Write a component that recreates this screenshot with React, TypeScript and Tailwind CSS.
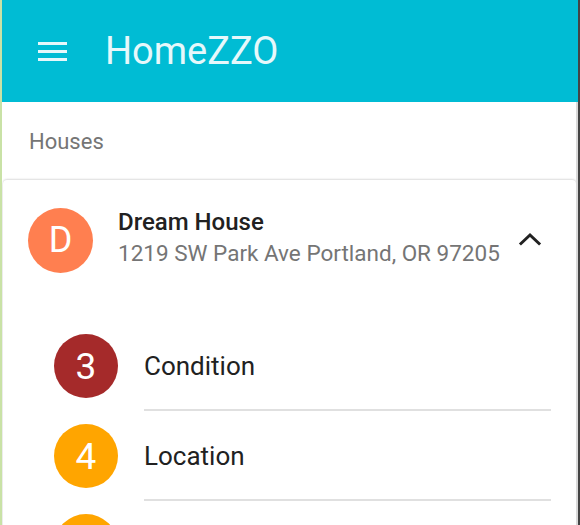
import React from 'react';

interface Section {
  num: string;
  label: string;
  color: string;
}

const sections: Section[] = [
  { num: '3', label: 'Condition', color: 'bg-[#a52a2a]' },
  { num: '4', label: 'Location', color: 'bg-[#ffa500]' },
  { num: '5', label: 'Price', color: 'bg-[#ffa500]' },
];

const MenuIcon = () => (
  <svg width="29" height="19" viewBox="0 0 29 19" fill="currentColor">
    <rect x="0" y="0" width="29" height="3" />
    <rect x="0" y="8" width="29" height="3" />
    <rect x="0" y="16" width="29" height="3" />
  </svg>
);

const ChevronUp = () => (
  <svg width="24" height="14" viewBox="0 0 24 14" fill="none" stroke="currentColor" strokeWidth="3" strokeLinecap="square">
    <path d="M3 11.5l9-8.5 9 8.5" />
  </svg>
);

export default function App() {
  return (
    <div
      className="w-[580px] h-[525px] overflow-hidden flex flex-col bg-white border-l-2 border-l-[#c9e2a6] border-r-2 border-r-[#444444]"
      style={{ fontFamily: 'Roboto, "Noto Sans", sans-serif' }}
    >
      <header className="h-[102px] flex-none bg-[#00bcd4] flex items-center pl-[36px] text-[#e6f8fb]">
        <MenuIcon />
        <h1 className="ml-[38px] text-[38px] font-normal leading-none">HomeZZO</h1>
      </header>

      <div className="flex-1 flex flex-col border-r-2 border-r-[#d9d9d9] overflow-hidden">
        <div className="h-[78px] flex-none flex items-center pl-[27px] text-[22px] text-[#757575]">Houses</div>

        <div className="ml-[1px] rounded-sm bg-white shadow-[0_-1px_2px_rgba(0,0,0,0.12),0_1px_3px_rgba(0,0,0,0.12)] flex-1">
          <div className="h-[120px] flex items-center pl-[25px] pr-[34px]">
            <div className="w-[65px] h-[65px] flex-none rounded-full bg-[#ff7f50] flex items-center justify-center text-white text-[36px] leading-none">
              D
            </div>
            <div className="ml-[25px] flex-1 flex flex-col mt-[-4px]">
              <span className="text-[24px] font-medium text-[#212121] leading-[31px]">Dream House</span>
              <span className="text-[22.5px] text-[#757575] leading-[31px] whitespace-nowrap">1219 SW Park Ave Portland, OR 97205</span>
            </div>
            <span className="text-[#212121] mt-[-2px]">
              <ChevronUp />
            </span>
          </div>

          <ul className="pt-[21px] pl-[51px] pr-[25px]">
            {sections.map((s) => (
              <li key={s.num} className="h-[90px] flex items-center">
                <div
                  className={`w-[64px] h-[64px] flex-none rounded-full ${s.color} flex items-center justify-center text-white text-[37px] font-normal leading-none`}
                >
                  {s.num}
                </div>
                <div className="ml-[26px] flex-1 h-full flex items-center pt-[2px] border-b-2 border-[#e0e0e0] text-[26px] text-[#212121]">
                  {s.label}
                </div>
              </li>
            ))}
          </ul>
        </div>
      </div>
    </div>
  );
}
